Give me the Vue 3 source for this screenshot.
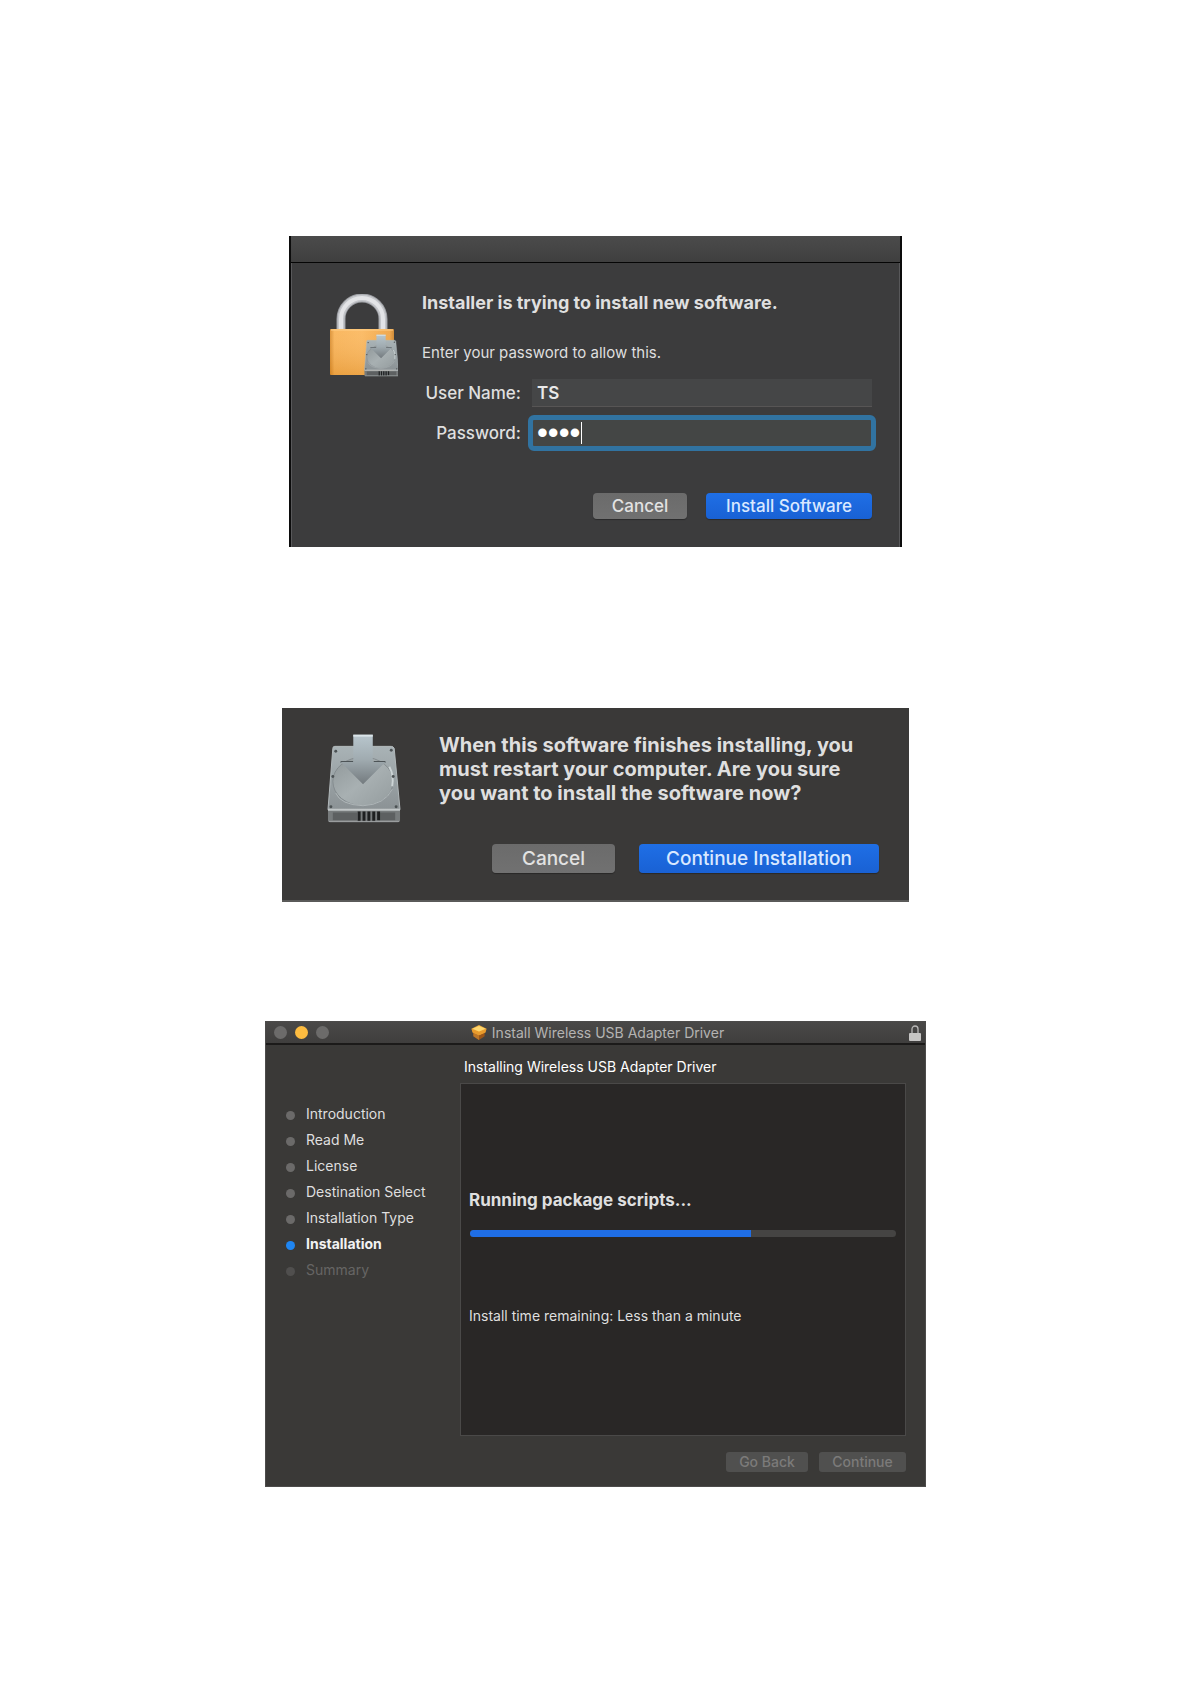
<template>
    <main class="page">
        <!-- Password prompt -->
        <form class="window auth" @submit.prevent>
            <div class="auth-bar"></div>
            <div class="auth-body">
                <svg class="auth-icon" viewBox="0 0 68 84" aria-hidden="true">
                    <defs>
                        <linearGradient id="gold" x1="0" x2="1">
                            <stop offset="0" stop-color="#d98c2c" />
                            <stop offset="0.07" stop-color="#f9b254" />
                            <stop offset="0.5" stop-color="#fbb75c" />
                            <stop offset="0.93" stop-color="#f0a240" />
                            <stop offset="1" stop-color="#c98128" />
                        </linearGradient>
                        <linearGradient id="goldShade" x1="0" y1="0" x2="0" y2="1">
                            <stop offset="0" stop-color="#fff" stop-opacity="0.08" />
                            <stop offset="1" stop-color="#b86400" stop-opacity="0.22" />
                        </linearGradient>
                    </defs>
                    <path d="M11 35V25a21 21 0 0 1 42 0V35" fill="none" stroke="#9b9da2" stroke-width="9" />
                    <path d="M11 35V25a21 21 0 0 1 42 0V35" fill="none" stroke="#c3c5c9" stroke-width="7" />
                    <path d="M11 35V25a21 21 0 0 1 42 0V35" fill="none" stroke="#e3e4e7" stroke-width="4" />
                    <rect y="35" width="64" height="46" rx="1" fill="url(#gold)" />
                    <rect y="35" width="64" height="46" rx="1" fill="url(#goldShade)" />
                    <path d="M1 36h62" stroke="#ffd08a" />
                    <svg x="34" y="40" width="35" height="43" viewBox="0 0 76 92">
                        <use href="#disk" />
                    </svg>
                </svg>
                <div class="auth-content">
                    <h1 class="auth-title">Installer is trying to install new software.</h1>
                    <p class="auth-text">Enter your password to allow this.</p>
                    <div class="fields">
                        <label for="userName">User Name:</label>
                        <input id="userName" v-model="userName" class="field" type="text" />
                        <label for="password">Password:</label>
                        <div class="password">
                            <input id="password" v-model="password" class="field focused" type="password" />
                            <span class="caret"></span>
                        </div>
                    </div>
                </div>
            </div>
            <div class="auth-actions">
                <button type="button" class="btn">Cancel</button>
                <button type="submit" class="btn primary">Install Software</button>
            </div>
        </form>

        <!-- Restart confirmation -->
        <section class="window confirm">
            <svg class="confirm-icon" viewBox="0 0 76 92" aria-hidden="true">
                <defs>
                    <linearGradient id="metal" x1="0" y1="0" x2="0" y2="1">
                        <stop offset="0" stop-color="#a9b3b6" />
                        <stop offset="1" stop-color="#8b9295" />
                    </linearGradient>
                    <linearGradient id="arrow" x1="0" y1="0" x2="0" y2="1">
                        <stop offset="0" stop-color="#b8c6cd" />
                        <stop offset="0.5" stop-color="#a0abb0" />
                        <stop offset="1" stop-color="#737a7e" />
                    </linearGradient>
                    <linearGradient id="platter" x1="0" y1="0" x2="1" y2="1">
                        <stop offset="0" stop-color="#8f9799" />
                        <stop offset="0.5" stop-color="#a8b0b2" />
                        <stop offset="1" stop-color="#949c9e" />
                    </linearGradient>
                </defs>
                <g id="disk">
                    <path d="M8 13h58q2 0 3 2l6 63H1L6 15q0-2 2-2z" fill="url(#metal)" stroke="#b3babc" />
                    <ellipse cx="37" cy="49" rx="31" ry="25" fill="url(#platter)" stroke="#848b8e" />
                    <path d="M9 61q5 12 28 13 22-1 30-17" fill="none" stroke="#b0b7b9" />
                    <path d="M64 34q5 9 3 20" fill="none" stroke="#ccd4d5" stroke-width="2" />
                    <path d="M14 29h13M48 29h12" stroke="#4d5457" stroke-width="2" />
                    <path d="M27 1h20v28h13L37 52 14 29h13z" fill="url(#arrow)" />
                    <path d="M27 2h20" stroke="#dbe5e9" stroke-width="2" />
                    <path d="M1 78h74v11q0 2-2 2H3q-2 0-2-2z" fill="#777b7c" />
                    <path d="M1 78h74" stroke="#c1c6c7" stroke-width="2" />
                    <path d="M6 81h25v8H6zM53 81h17v8H53z" fill="#5d6061" />
                    <path d="M33 80v10M38 80v10M43 80v10M48 80v10M53 80v9" stroke="#1e2021" stroke-width="3" />
                    <path d="M2 90h72" stroke="#a2a6a7" />
                    <g fill="#4c5254">
                        <circle cx="9" cy="18" r="1.5" />
                        <circle cx="66" cy="17" r="1.5" />
                        <circle cx="6" cy="44" r="1.5" />
                        <circle cx="68" cy="44" r="1.5" />
                        <circle cx="4" cy="75" r="1.5" />
                        <circle cx="71" cy="75" r="1.5" />
                    </g>
                </g>
            </svg>
            <div class="confirm-content">
                <p class="confirm-text">
                    When this software finishes installing, you<br />
                    must restart your computer. Are you sure<br />
                    you want to install the software now?
                </p>
                <div class="confirm-actions">
                    <button type="button" class="btn">Cancel</button>
                    <button type="button" class="btn primary">Continue Installation</button>
                </div>
            </div>
        </section>

        <!-- Installer progress -->
        <section class="window installer">
            <header class="titlebar">
                <div class="lights">
                    <span class="light"></span>
                    <span class="light yellow"></span>
                    <span class="light"></span>
                </div>
                <div class="titlebar-title">
                    <svg class="package" viewBox="0 0 16 16" aria-hidden="true">
                        <path d="M2 7l6 3 6-3v5l-6 4-6-4z" fill="#9a5518" />
                        <path d="M2 8l6 3v5l-6-4z" fill="#bd7628" />
                        <path d="M0 4l8-4 8 4-2 4-6 3-6-3z" fill="#f0ae3c" />
                        <path d="M0 4l8 3 8-3-1 4-7 3-7-3z" fill="#e99b2d" />
                        <path d="M1 4l7-3 7 3-7 3z" fill="#ffd770" />
                    </svg>
                    <span>Install Wireless USB Adapter Driver</span>
                </div>
                <div class="titlebar-end">
                    <svg class="lock" viewBox="0 0 12 16" aria-hidden="true">
                        <path d="M3 8V4a3 3 0 0 1 6 0v4" fill="none" stroke="#b9b8b7" stroke-width="1.3" />
                        <rect y="8" width="12" height="8" rx="1" fill="#c6c5c4" />
                    </svg>
                </div>
            </header>
            <div class="installer-body">
                <ol class="steps">
                    <li v-for="step in steps" :key="step.label" class="step" :class="step.state">
                        <span class="dot"></span>
                        {{ step.label }}
                    </li>
                </ol>
                <div class="installer-main">
                    <h2 class="installer-title">Installing Wireless USB Adapter Driver</h2>
                    <div class="panel">
                        <p class="status">Running package scripts...</p>
                        <div class="track">
                            <div class="fill" :style="{ width: progress + '%' }"></div>
                        </div>
                        <p class="remaining">Install time remaining: Less than a minute</p>
                    </div>
                    <div class="installer-actions">
                        <button type="button" class="small-btn" disabled>Go Back</button>
                        <button type="button" class="small-btn" disabled>Continue</button>
                    </div>
                </div>
            </div>
        </section>
    </main>
</template>

<script setup>
import { ref } from 'vue';

const userName = ref('TS');
const password = ref('1234');
const progress = ref(66);

const steps = [
    { label: 'Introduction', state: 'done' },
    { label: 'Read Me', state: 'done' },
    { label: 'License', state: 'done' },
    { label: 'Destination Select', state: 'done' },
    { label: 'Installation Type', state: 'done' },
    { label: 'Installation', state: 'current' },
    { label: 'Summary', state: 'pending' },
];
</script>

<style>
body {
    margin: 0;
    background: #fff;
}
</style>

<style scoped>
.page {
    display: flex;
    flex-direction: column;
    align-items: center;
    padding: 236px 16px 190px;
    font-family: Inter, "Liberation Sans", sans-serif;
    color: #dfdfdf;
}

.window,
.window * {
    box-sizing: border-box;
}

.window {
    width: 100%;
}

h1,
h2,
p,
ol {
    margin: 0;
    padding: 0;
}

.btn {
    height: 29px;
    padding: 0;
    border: 0;
    border-radius: 4px;
    background: linear-gradient(#6b6b6b, #717171);
    box-shadow: 0 1px 1px rgba(0, 0, 0, 0.3);
    color: #e2e2e2;
    font: 500 17px/29px Inter, "Liberation Sans", sans-serif;
}

.btn.primary {
    background: linear-gradient(#1f6fe6, #1961d4);
    color: #d9e8ff;
}

/* password prompt */
.auth {
    max-width: 613px;
    margin-bottom: 161px;
    padding-bottom: 28px;
    border: 1px solid #0c0c0c;
    border-width: 0 2px;
    background: #3c3c3d;
    box-shadow: inset 1px 0 #58585a, inset -1px 0 #58585a;
}

.auth-bar {
    height: 27px;
    border-bottom: 1px solid #050505;
    background: linear-gradient(#4b4b4b, #3f3f3f);
}

.auth-body {
    display: flex;
    padding: 28px 28px 0 39px;
}

.auth-icon {
    flex: none;
    width: 68px;
    height: 84px;
    margin: 3px 24px 0 0;
}

.auth-content {
    flex: 1;
    min-width: 0;
}

.auth-title {
    font-size: 18px;
    font-weight: 700;
    line-height: 24px;
}

.auth-text {
    margin-top: 28px;
    font-size: 15px;
    line-height: 20px;
}

.fields {
    display: grid;
    grid-template-columns: 99px 1fr;
    gap: 12px 11px;
    margin-top: 16px;
    font-size: 17px;
    font-weight: 500;
    line-height: 28px;
}

.fields label {
    text-align: right;
}

.field {
    display: block;
    width: 100%;
    height: 28px;
    padding: 0 5px;
    border: 0;
    border-bottom: 1px solid #575555;
    background: #454647;
    color: #e9e9e9;
    font: 600 17px Inter, "Liberation Sans", sans-serif;
}

.password {
    position: relative;
}

.focused {
    border: 0;
    outline: 5px solid #3173a1;
    outline-offset: -1px;
    border-radius: 2px;
    background: #444645;
    color: #fff;
    font: 31px "Liberation Sans", sans-serif;
}

.caret {
    position: absolute;
    top: 3px;
    left: 49px;
    width: 1px;
    height: 22px;
    background: #fff;
}

.auth-actions {
    display: grid;
    grid-template-columns: 94px 166px;
    justify-content: end;
    gap: 19px;
    margin-top: 46px;
    padding-right: 28px;
}

.auth-actions .btn {
    height: 26px;
    line-height: 26px;
}

/* restart confirmation */
.confirm {
    display: flex;
    max-width: 627px;
    margin-bottom: 119px;
    padding: 25px 30px 27px 45px;
    border-bottom: 2px solid #5a5a59;
    background: #3a3938;
}

.confirm-icon {
    flex: none;
    width: 74px;
    height: 91px;
    margin-right: 38px;
}

.confirm-content {
    flex: 1;
    min-width: 0;
}

.confirm-text {
    font-size: 20px;
    font-weight: 700;
    line-height: 24px;
}

.confirm-actions {
    display: grid;
    grid-template-columns: 123px 240px;
    justify-content: end;
    gap: 24px;
    margin-top: 39px;
}

.confirm-actions .btn {
    font-size: 19px;
}

/* installer progress */
.installer {
    max-width: 661px;
    border: 1px solid #4c4b4a;
    background: #3a3937;
}

.titlebar {
    display: flex;
    align-items: center;
    justify-content: space-between;
    height: 23px;
    padding: 0 4px 0 8px;
    border-bottom: 2px solid #1b1a19;
    background: linear-gradient(#4a4948, #3f3e3d);
}

.lights {
    display: flex;
    flex: 1;
    gap: 8px;
}

.light {
    width: 13px;
    height: 13px;
    border-radius: 50%;
    background: #6c6b6a;
}

.light.yellow {
    background: #fdbc40;
}

.titlebar-title {
    display: flex;
    align-items: center;
    gap: 5px;
    color: #b4b3b2;
    font-size: 14px;
    line-height: 20px;
}

.package {
    width: 16px;
    height: 15px;
}

.titlebar-end {
    display: flex;
    flex: 1;
    justify-content: flex-end;
}

.lock {
    width: 12px;
    height: 16px;
}

.installer-body {
    display: flex;
    padding: 12px 19px 14px;
}

.steps {
    flex: none;
    width: 175px;
    padding: 44px 0 0 1px;
    list-style: none;
    font-size: 14px;
    line-height: 26px;
}

.step {
    display: flex;
    align-items: center;
    gap: 11px;
    white-space: nowrap;
}

.dot {
    width: 9px;
    height: 9px;
    margin-top: 3px;
    border-radius: 50%;
    background: #6b6a69;
}

.step.current {
    color: #f2f2f2;
    font-weight: 700;
}

.step.current .dot {
    background: #1f86f2;
}

.step.pending {
    color: #666564;
}

.step.pending .dot {
    background: #504f4e;
}

.installer-main {
    flex: 1;
    min-width: 0;
}

.installer-title {
    padding-left: 4px;
    color: #fff;
    font-size: 14px;
    font-weight: 400;
    line-height: 20px;
}

.panel {
    height: 353px;
    margin-top: 6px;
    padding: 104px 9px 0 8px;
    border: 1px solid #4a4948;
    background: #292726;
}

.status {
    font-size: 17px;
    font-weight: 700;
    line-height: 24px;
}

.track {
    height: 7px;
    margin: 18px 0 0 1px;
    border-radius: 4px;
    background: #454443;
}

.fill {
    height: 7px;
    border-radius: 4px 0 0 4px;
    background: #1f6ee6;
}

.remaining {
    margin-top: 69px;
    font-size: 14px;
    line-height: 20px;
}

.installer-actions {
    display: grid;
    grid-template-columns: 82px 87px;
    justify-content: end;
    gap: 11px;
    margin-top: 16px;
}

.small-btn {
    height: 20px;
    padding: 0;
    border: 0;
    border-radius: 3px;
    background: #50504f;
    color: #7c7b7a;
    font: 500 14px/20px Inter, "Liberation Sans", sans-serif;
}
</style>
